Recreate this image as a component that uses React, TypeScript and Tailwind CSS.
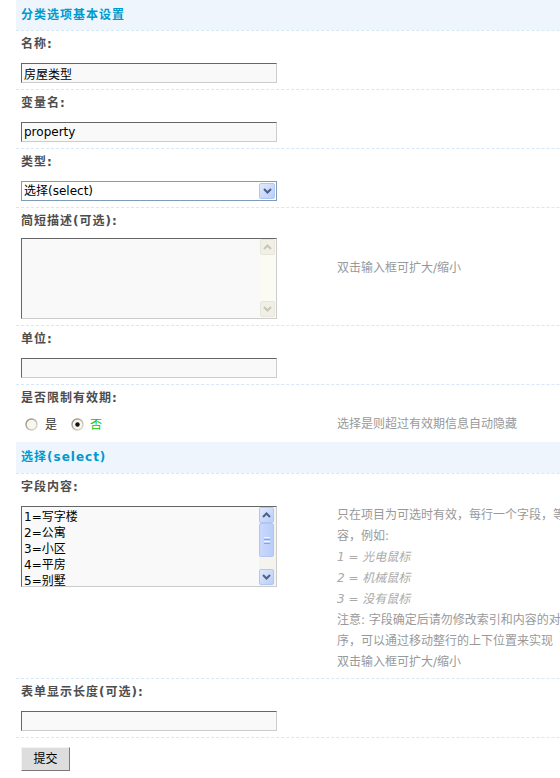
import type { ReactNode } from 'react';

const line = 'border-b border-dashed border-[#d6e8f7]';
const sunken =
  'border border-t-[#666666] border-l-[#666666] border-b-[#cccccc] border-r-[#cccccc] bg-[#f9f9f9]';

function Section({ title, tall }: { title: string; tall?: boolean }) {
  return (
    <div
      className={`${tall ? 'h-[32px]' : 'h-[31px]'} flex items-center bg-[#eef5fd] bg-clip-padding px-[5px] ${line}`}
    >
      <span className="pb-px text-[12px] font-bold tracking-[1px] text-[#0099cc]">{title}</span>
    </div>
  );
}

function Label({ children }: { children: ReactNode }) {
  return (
    <div className="flex h-[26px] items-center px-[5px] text-[12px] font-bold tracking-[1px] text-[#4d4d4d]">
      {children}
    </div>
  );
}

function FieldRow({
  children,
  note,
  leftClass = 'pt-[6px] pb-[6px]',
  noteClass = 'self-center',
  dashed = true,
}: {
  children: ReactNode;
  note?: ReactNode;
  leftClass?: string;
  noteClass?: string;
  dashed?: boolean;
}) {
  return (
    <div className={`flex ${dashed ? line : ''}`}>
      <div className={`w-[316px] shrink-0 px-[5px] ${leftClass}`}>{children}</div>
      <div className={`pl-[5px] text-[12px] leading-[21px] whitespace-nowrap text-[#999] ${noteClass}`}>
        {note}
      </div>
    </div>
  );
}

function TextBox({ value }: { value?: string }) {
  return (
    <input
      readOnly
      value={value ?? ''}
      className={`block h-[20px] w-[256px] px-[2px] text-[12px] text-black outline-none ${sunken}`}
    />
  );
}

function Chevron({ up, color }: { up?: boolean; color: string }) {
  return (
    <svg width="9" height="6" viewBox="0 0 9 6">
      <path
        d={up ? 'M1 5 L4.5 1.5 L8 5' : 'M1 1 L4.5 4.5 L8 1'}
        fill="none"
        stroke={color}
        strokeWidth="2"
      />
    </svg>
  );
}

// XP style scroll arrow buttons
function ScrollBtn({ up, disabled }: { up?: boolean; disabled?: boolean }) {
  return disabled ? (
    <div className="flex h-[16px] w-[15px] items-center justify-center rounded-[2px] border border-[#e8e6da] bg-[#f1f0e7]">
      <Chevron up={up} color="#c9c6b5" />
    </div>
  ) : (
    <div className="flex h-[16px] w-[15px] items-center justify-center rounded-[2px] border border-[#b3c6f2] bg-gradient-to-br from-[#e1eafe] to-[#b9cdf8]">
      <Chevron up={up} color="#4d6185" />
    </div>
  );
}

function SelectBox() {
  return (
    <div className="flex h-[20px] w-[256px] items-center border border-[#7f9db9] bg-white">
      <span className="flex-1 pl-[2px] text-[12px] text-black">选择(select)</span>
      <span className="mr-px flex h-[16px] w-[16px] items-center justify-center rounded-[2px] border border-[#b3c6f2] bg-gradient-to-br from-[#e1eafe] to-[#b9cdf8]">
        <Chevron color="#4d6185" />
      </span>
    </div>
  );
}

function Radio({ checked }: { checked?: boolean }) {
  return (
    <svg width="13" height="13" viewBox="0 0 13 13">
      <defs>
        <linearGradient id={checked ? 'rg1' : 'rg0'} x1="0" y1="0" x2="1" y2="1">
          <stop offset="0" stopColor="#8b877a" />
          <stop offset="1" stopColor="#e6e3d6" />
        </linearGradient>
      </defs>
      <circle cx="6.5" cy="6.5" r="5.5" fill="#f7f6ef" stroke={`url(#${checked ? 'rg1' : 'rg0'})`} strokeWidth="1.4" />
      {checked && <circle cx="6.5" cy="6.5" r="2.2" fill="#111" />}
    </svg>
  );
}

const options = ['1=写字楼', '2=公寓', '3=小区', '4=平房', '5=别墅'];

export default function App() {
  return (
    <div className="w-full overflow-hidden bg-white font-['DejaVu_Sans','Noto_Sans_CJK_SC',sans-serif]">
      <div className="w-[1200px] pl-[16px]">
        <Section title="分类选项基本设置" />

        <Label>名称:</Label>
        <FieldRow>
          <TextBox value="房屋类型" />
        </FieldRow>

        <Label>变量名:</Label>
        <FieldRow>
          <TextBox value="property" />
        </FieldRow>

        <Label>类型:</Label>
        <FieldRow>
          <SelectBox />
        </FieldRow>

        <Label>简短描述(可选):</Label>
        <FieldRow
          leftClass="pt-[4px] pb-[6px]"
          noteClass="pt-[24px]"
          note="双击输入框可扩大/缩小"
        >
          <div className={`flex h-[81px] w-[256px] ${sunken}`}>
            <textarea readOnly className="flex-1 resize-none bg-transparent outline-none" />
            <div className="flex w-[16px] flex-col justify-between bg-[#fbfbf3] pb-px">
              <ScrollBtn up disabled />
              <ScrollBtn disabled />
            </div>
          </div>
        </FieldRow>

        <Label>单位:</Label>
        <FieldRow>
          <TextBox />
        </FieldRow>

        <Label>是否限制有效期:</Label>
        <FieldRow
          dashed={false}
          leftClass="h-[31px] flex items-center pb-[4px]"
          noteClass="self-center pb-[4px]"
          note="选择是则超过有效期信息自动隐藏"
        >
          <div className="flex items-center pl-[4px] text-[12px]">
            <Radio />
            <span className="ml-[7px] text-[#333]">是</span>
            <span className="ml-[14px]">
              <Radio checked />
            </span>
            <span className="ml-[6px] text-[#00cc00]">否</span>
          </div>
        </FieldRow>

        <Section title="选择(select)" tall />

        <Label>字段内容:</Label>
        <FieldRow
          leftClass="pt-[6px]"
          noteClass="pt-[5px] pb-[5px]"
          note={
            <>
              <div>只在项目为可选时有效，每行一个字段，等号前面为字段索引(建议写数字)后面为内</div>
              <div>容，例如:</div>
              <div className="italic text-[#aaa]">1 = 光电鼠标</div>
              <div className="italic text-[#aaa]">2 = 机械鼠标</div>
              <div className="italic text-[#aaa]">3 = 没有鼠标</div>
              <div>注意: 字段确定后请勿修改索引和内容的对应关系，但仍可以新增字段。如需调换显示顺</div>
              <div>序，可以通过移动整行的上下位置来实现</div>
              <div>双击输入框可扩大/缩小</div>
            </>
          }
        >
          <div className={`flex h-[81px] w-[256px] overflow-hidden ${sunken}`}>
            <div className="flex-1 overflow-hidden pt-[2px] pl-[2px] text-[12px] leading-[16px] text-black">
              {options.map((o) => (
                <div key={o}>{o}</div>
              ))}
            </div>
            <div className="flex w-[17px] flex-col bg-[#f4f3ee] pb-px">
              <ScrollBtn up />
              <div className="flex h-[34px] w-[15px] items-center justify-center rounded-[2px] border border-[#b3c6f2] bg-gradient-to-r from-[#c9d8fd] to-[#b9cdf8]">
                <div className="flex flex-col gap-[1px]">
                  <span className="h-px w-[6px] bg-[#eef3ff]" />
                  <span className="h-px w-[6px] bg-[#8ca3da]" />
                  <span className="h-px w-[6px] bg-[#eef3ff]" />
                  <span className="h-px w-[6px] bg-[#8ca3da]" />
                </div>
              </div>
              <div className="flex-1" />
              <ScrollBtn />
            </div>
          </div>
        </FieldRow>

        <Label>表单显示长度(可选):</Label>
        <FieldRow>
          <TextBox />
        </FieldRow>

        <div className="px-[5px] pt-[8px] pb-[8px]">
          <button className="h-[24px] w-[49px] border border-t-[#f4f4f4] border-l-[#f4f4f4] border-b-[#7a7a7a] border-r-[#7a7a7a] bg-[#dddddd] text-[12px] text-black">
            提交
          </button>
        </div>
      </div>
    </div>
  );
}
